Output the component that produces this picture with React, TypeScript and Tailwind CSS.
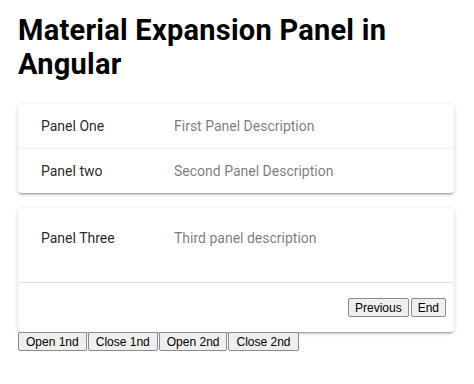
import React from "react";

const shadow =
  "shadow-[0_3px_1px_-2px_rgba(0,0,0,0.2),0_2px_2px_0_rgba(0,0,0,0.14),0_1px_5px_0_rgba(0,0,0,0.12)]";

function PanelHeader({ title, description, tall }: { title: string; description: string; tall?: boolean }) {
  return (
    <div className={`flex items-center px-[23px] ${tall ? "h-[60px]" : "h-[44px]"}`}>
      <span className="w-[117px] mr-4 text-[14px] text-black/[0.87]">{title}</span>
      <span className="text-[14px] text-black/[0.54]">{description}</span>
    </div>
  );
}

function NativeButton({ children, wide }: { children: React.ReactNode; wide?: boolean }) {
  return (
    <button
      className={`h-[19px] ${wide ? "px-[7px]" : "px-[6px]"} text-[12px] leading-none text-black bg-[#efefef] border border-[#8a8a8a] rounded-[2px]`}
      style={{ fontFamily: '"Liberation Sans", Arial, sans-serif' }}
    >
      {children}
    </button>
  );
}

export default function App() {
  return (
    <div className="px-[18px] pt-[13px] bg-white min-h-[384px]" style={{ fontFamily: "Roboto, sans-serif" }}>
      <h1 className="text-[29px] leading-[34px] tracking-[0.25px] font-bold text-black">
        Material Expansion Panel in Angular
      </h1>

      {/* first accordion */}
      <div className={`mt-[23px] w-[436px] bg-white rounded ${shadow}`}>
        <PanelHeader title="Panel One" description="First Panel Description" />
        <div className="border-t border-black/[0.05]">
          <PanelHeader title="Panel two" description="Second Panel Description" />
        </div>
      </div>

      {/* second accordion, expanded */}
      <div className={`mt-[15px] w-[436px] bg-white rounded ${shadow}`}>
        <PanelHeader title="Panel Three" description="Third panel description" tall />
        <div className="h-[14px]" />
        <div className="flex justify-end gap-[2px] border-t border-black/[0.12] py-[15px] pr-2 pl-6">
          <NativeButton>Previous</NativeButton>
          <NativeButton>End</NativeButton>
        </div>
      </div>

      <div className="flex gap-[1px]">
        <NativeButton wide>Open 1nd</NativeButton>
        <NativeButton wide>Close 1nd</NativeButton>
        <NativeButton wide>Open 2nd</NativeButton>
        <NativeButton wide>Close 2nd</NativeButton>
      </div>
    </div>
  );
}
